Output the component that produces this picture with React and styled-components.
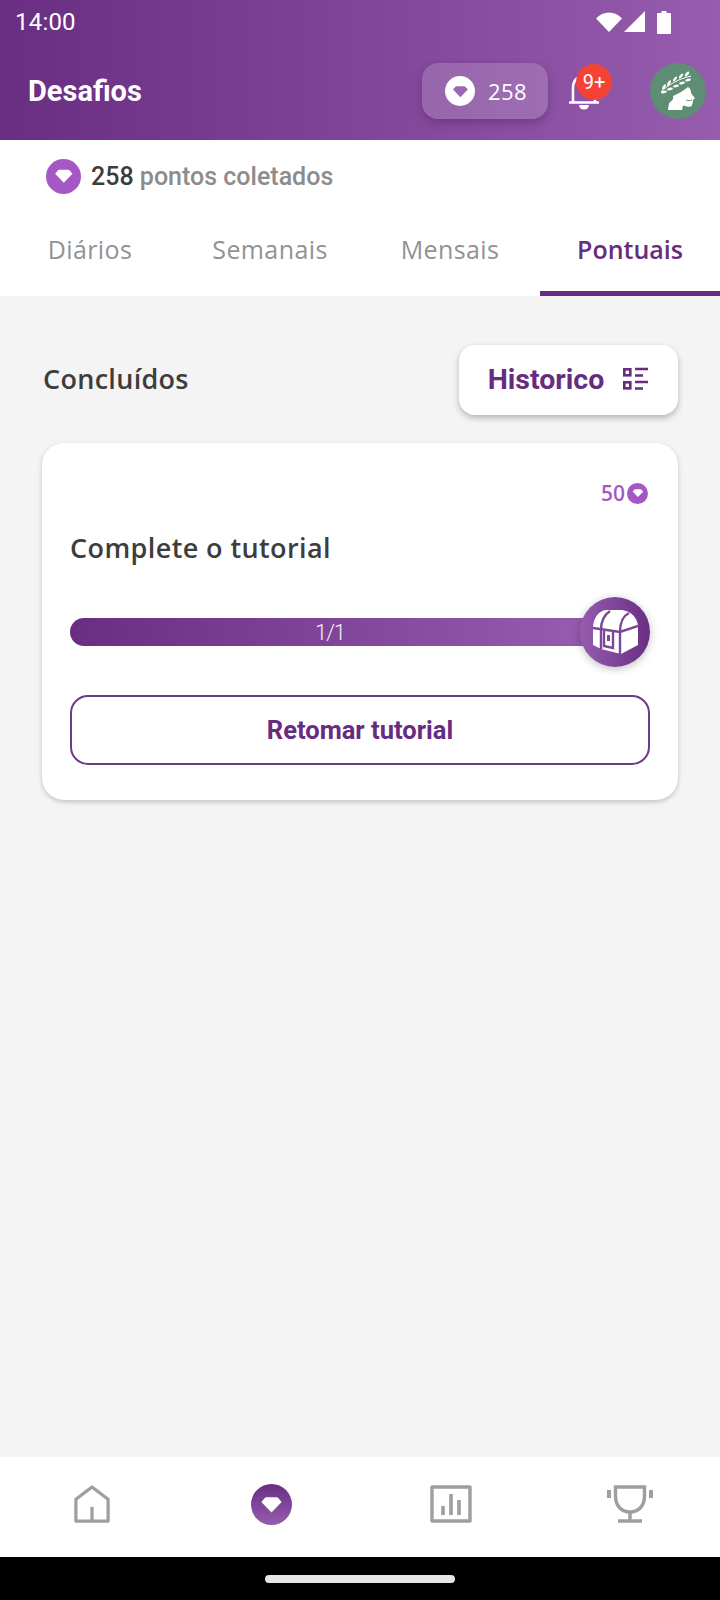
import React from 'react';
import styled, { createGlobalStyle } from 'styled-components';

const GlobalStyle = createGlobalStyle`
  html, body { margin: 0; padding: 0; background: #f4f4f4; }
  * { box-sizing: border-box; }
`;

const purpleGradient = 'linear-gradient(90deg, #692e82 0%, #965cae 100%)';
const roundedFont = '"Open Sans", Lato, sans-serif';

const Page = styled.div`
  width: 720px;
  height: 1600px;
  display: flex;
  flex-direction: column;
  overflow: hidden;
  font-family: Roboto, sans-serif;
  background: #f4f4f4;
`;

const Header = styled.header`
  height: 140px;
  padding: 0 14px 0 15px;
  background: ${purpleGradient};
  color: #fff;
`;

const StatusBar = styled.div`
  height: 44px;
  display: flex;
  align-items: center;
  justify-content: space-between;
  font-size: 24px;
  letter-spacing: 0.2px;
`;

const StatusIcons = styled.div`
  display: flex;
  align-items: center;
  margin-right: 35px;
`;

const SignalSlot = styled.span`
  display: flex;
  margin: 0 12px 0 2px;
`;

const Toolbar = styled.div`
  height: 96px;
  padding: 0 0 2px 13px;
  display: flex;
  align-items: center;
  justify-content: space-between;
`;

const Title = styled.h1`
  margin: 0;
  font-size: 29px;
  font-weight: 700;
`;

const ToolbarRight = styled.div`
  display: flex;
  align-items: center;
`;

const PointsChip = styled.div`
  width: 126px;
  height: 56px;
  padding-left: 2px;
  border-radius: 16px;
  background: rgba(255, 255, 255, 0.16);
  box-shadow: 0 4px 8px rgba(60, 20, 80, 0.3);
  display: flex;
  align-items: center;
  justify-content: center;
  gap: 13px;
  font-family: ${roundedFont};
  font-size: 22px;
  letter-spacing: 0.4px;
`;

const BellWrap = styled.div`
  position: relative;
  width: 30px;
  height: 36px;
  margin: 2px 51px 0 21px;
`;

const Badge = styled.span`
  position: absolute;
  left: 7px;
  top: -10px;
  width: 36px;
  height: 36px;
  border-radius: 50%;
  background: #f44336;
  display: flex;
  align-items: center;
  justify-content: center;
  font-size: 20px;
  color: #fff;
`;

const Avatar = styled.div`
  width: 56px;
  height: 56px;
  border-radius: 50%;
  background: #5d8d72;
  overflow: hidden;
`;

const PointsRow = styled.div`
  height: 72px;
  padding: 0 46px 0;
  background: #fff;
  display: flex;
  align-items: center;
  gap: 10px;
  font-size: 25px;
  font-weight: 500;
  color: #8c8c8c;
`;

const PointsValue = styled.span`
  color: #3c3c3c;
`;

const Tabs = styled.nav`
  height: 84px;
  background: #fff;
  display: grid;
  grid-template-columns: repeat(4, 1fr);
`;

const Tab = styled.div`
  display: flex;
  align-items: center;
  justify-content: center;
  padding-bottom: 6px;
  font-family: ${roundedFont};
  font-size: 25px;
  letter-spacing: ${(p) => (p.$active ? 0 : 0.4)}px;
  font-weight: ${(p) => (p.$active ? 600 : 400)};
  color: ${(p) => (p.$active ? '#672c80' : '#929292')};
  border-bottom: 5px solid ${(p) => (p.$active ? '#672c80' : 'transparent')};
`;

const Content = styled.main`
  flex: 1;
  padding: 49px 42px 0;
`;

const SectionHead = styled.div`
  height: 70px;
  display: flex;
  align-items: center;
  justify-content: space-between;
`;

const SectionTitle = styled.h2`
  margin: 0 0 3px 1px;
  font-family: ${roundedFont};
  font-size: 27px;
  font-weight: 600;
  letter-spacing: 0.3px;
  color: #3d3d3d;
`;

const HistoryButton = styled.button`
  width: 219px;
  height: 70px;
  padding: 0 0 2px;
  border: 0;
  border-radius: 16px;
  background: #fff;
  box-shadow: 0 3px 6px rgba(0, 0, 0, 0.26);
  display: flex;
  align-items: center;
  justify-content: center;
  gap: 19px;
  font-family: Roboto, sans-serif;
  font-size: 28.500px;
  font-weight: 700;
  color: #672c80;
`;

const Card = styled.section`
  margin-top: 28px;
  height: 357px;
  padding: 38px 28px 0;
  border-radius: 22px;
  background: #fff;
  box-shadow: 0 2px 5px rgba(0, 0, 0, 0.2);
`;

const Reward = styled.div`
  display: flex;
  justify-content: flex-end;
  align-items: center;
  gap: 2px;
  height: 24px;
  padding-right: 2px;
  font-family: ${roundedFont};
  font-size: 21px;
  font-weight: 600;
  color: #a657c6;
`;

const CardTitle = styled.h3`
  margin: 23px 0 0;
  height: 40px;
  line-height: 40px;
  font-family: ${roundedFont};
  font-size: 27px;
  font-weight: 600;
  letter-spacing: 0.4px;
  color: #3d3d3d;
`;

const ProgressWrap = styled.div`
  position: relative;
  margin-top: 50px;
  height: 28px;
`;

const ProgressBar = styled.div`
  width: 520px;
  height: 28px;
  border-radius: 14px 0 0 14px;
  background: ${purpleGradient};
  display: flex;
  align-items: center;
  justify-content: center;
  color: #f3eaf6;
  font-size: 22px;
  font-weight: 300;
  letter-spacing: -1px;
`;

const ChestBadge = styled.div`
  position: absolute;
  right: 0;
  top: -21px;
  width: 70px;
  height: 70px;
  border-radius: 50%;
  background: linear-gradient(90deg, #965cae 0%, #692e82 100%);
  box-shadow: 0 2px 8px rgba(0, 0, 0, 0.25);
  display: flex;
  align-items: center;
  justify-content: center;
`;

const ResumeButton = styled.button`
  display: block;
  width: 100%;
  height: 70px;
  margin-top: 49px;
  border: 2px solid #6f3a88;
  border-radius: 18px;
  background: #fff;
  font-family: Roboto, sans-serif;
  font-size: 25.500px;
  font-weight: 700;
  color: #672c80;
`;

const BottomNav = styled.nav`
  height: 100px;
  padding: 0 0 6px 2px;
  background: #fff;
  display: grid;
  grid-template-columns: repeat(4, 1fr);
`;

const NavItem = styled.div`
  display: flex;
  align-items: center;
  justify-content: center;
`;

const SystemBar = styled.div`
  height: 43px;
  background: #000;
  display: flex;
  justify-content: center;
  padding-top: 18px;
`;

const HomeHandle = styled.div`
  width: 190px;
  height: 8px;
  border-radius: 4px;
  background: #e6e6e6;
`;

const GemDisc = styled.span`
  width: ${(p) => p.$size}px;
  height: ${(p) => p.$size}px;
  border-radius: 50%;
  flex: none;
  background: ${(p) => p.$bg};
  display: inline-flex;
  align-items: center;
  justify-content: center;
`;

const Gem = ({ size, bg, fg = '#fff' }) => (
  <GemDisc $size={size} $bg={bg}>
    <svg width={size * 0.56} height={size * 0.56} viewBox="0 0 24 24">
      <path d="M6.500 4.500h11a2 2 0 0 1 1.500.7l3.600 4.200-10.600 11-10.600-11L5 5.200a2 2 0 0 1 1.500-.7z" fill={fg} />
    </svg>
  </GemDisc>
);

const WifiIcon = () => (
  <svg width="26" height="22" viewBox="0 0 26 22">
    <path d="M0 7.500C3.500 3.500 8 1.500 13 1.500s9.500 2 13 6L13 21z" fill="#fff" />
  </svg>
);

const SignalIcon = () => (
  <svg width="21" height="22" viewBox="0 0 21 22">
    <path d="M21 0v21H0z" fill="#fff" />
  </svg>
);

const BatteryIcon = () => (
  <svg width="14" height="23" viewBox="0 0 14 23">
    <path d="M4.500 0h5v2H13a1 1 0 0 1 1 1v19a1 1 0 0 1-1 1H1a1 1 0 0 1-1-1V3a1 1 0 0 1 1-1h3.500z" fill="#fff" />
  </svg>
);

const BellIcon = () => (
  <svg width="30" height="36" viewBox="0 0 30 36" fill="none">
    <path d="M4 28V14C4 6 9 2 15 2s11 4 11 12v14" stroke="#fff" strokeWidth="2.600" />
    <path d="M1 28.500h28" stroke="#fff" strokeWidth="2.600" strokeLinecap="round" />
    <path d="M10 31h10a5 4.500 0 0 1-10 0z" fill="#fff" />
  </svg>
);

// two rows of leaves following the wreath, from the back of the head to the brow
const laurelLeaves = [
  [14, 24, -55], [19, 20, -55], [25, 16, -50], [31, 13, -50], [37, 11, -45],
  [14, 29, -8], [20, 26, -8], [26, 23, -10], [32, 20, -12], [38, 17, -15],
];

const CaesarIcon = () => (
  <svg width="56" height="56" viewBox="0 0 56 56">
    <path d="M23 33C28 31 33 28 38 24 40 25 41 27 41 30L45 35.500 43 36.500C43.500 38 43 38.500 42.500 39 43 40 42.500 41 42 41.500 42 43.500 40 44 37 43.500L33 42.500 32 47H18C18.500 44 18.500 41 19.500 39.500 22 38 24 36 23 33z" fill="#fff" />
    <path d="M36 37c2 .8 4 .8 6 .2" fill="none" stroke="#5d8d72" strokeWidth="1" />
    <path d="M11 29C18 22 28 16 41 13" fill="none" stroke="#fff" strokeWidth="1" />
    {laurelLeaves.map(([x, y, angle]) => (
      <ellipse key={`${x}-${y}`} cx={x} cy={y} rx="3" ry="1.300" fill="#fff" transform={`rotate(${angle} ${x} ${y})`} />
    ))}
  </svg>
);

const FilterListIcon = () => (
  <svg width="26" height="24" viewBox="0 0 26 24" fill="none" stroke="#672c80" strokeWidth="2.600">
    <rect x="1.300" y="2.300" width="6" height="6" />
    <rect x="1.300" y="15.300" width="6" height="6" />
    <path d="M12 2h13M12 8.500h8M12 15h13M12 21.500h8" />
  </svg>
);

const ChestIcon = () => (
  <svg width="45" height="44" viewBox="0 0 45 44">
    <path d="M0 18C0 8 6 0 14 0h15c9 1 16 8 16 17v18l-17 9-20-5-8-4z" fill="#fff" />
    <g fill="none" stroke="#7d4796" strokeWidth="2.400">
      <path d="M0 18l27 4 18-6" />
      <path d="M8 20C8 12 11 5 17 1" />
      <path d="M27 22C27 13 30 6 36 3" />
      <path d="M8 20v19M27 22v22" />
      <path d="M11 21v15l9 2V22" />
    </g>
    <rect x="14" y="25" width="3" height="6" fill="#7d4796" />
  </svg>
);

const HomeIcon = () => (
  <svg width="36" height="38" viewBox="0 0 38 40" fill="none" stroke="#9e9e9e" strokeWidth="3.400" strokeLinejoin="round">
    <path d="M2 15 19 2l17 13v23H2z" />
    <path d="M19 23v15" />
  </svg>
);

const StatsIcon = () => (
  <svg width="42" height="38" viewBox="0 0 42 38" fill="none" stroke="#9e9e9e">
    <rect x="2" y="2" width="38" height="34" strokeWidth="3.400" strokeLinejoin="round" />
    <path d="M13 21v9M21 9v21M29 15v15" strokeWidth="3.600" />
  </svg>
);

const TrophyIcon = () => (
  <svg width="46" height="38" viewBox="0 0 46 38" fill="none" stroke="#9e9e9e" strokeWidth="3.400">
    <path d="M8.500 2h29v9c0 10-6 16-14.500 16S8.500 21 8.500 11z" />
    <path d="M23 27v9M11 36h24" />
    <path d="M2 5v8M44 5v8" strokeWidth="4" />
  </svg>
);

const tabs = ['Diários', 'Semanais', 'Mensais', 'Pontuais'];

export default function App() {
  return (
    <Page>
      <GlobalStyle />
      <Header>
        <StatusBar>
          <span>14:00</span>
          <StatusIcons>
            <WifiIcon />
            <SignalSlot>
              <SignalIcon />
            </SignalSlot>
            <BatteryIcon />
          </StatusIcons>
        </StatusBar>
        <Toolbar>
          <Title>Desafios</Title>
          <ToolbarRight>
            <PointsChip>
              <Gem size={30} bg="#fff" fg="#9a68b2" />
              258
            </PointsChip>
            <BellWrap>
              <BellIcon />
              <Badge>9+</Badge>
            </BellWrap>
            <Avatar>
              <CaesarIcon />
            </Avatar>
          </ToolbarRight>
        </Toolbar>
      </Header>

      <PointsRow>
        <Gem size={35} bg="#a657c6" />
        <span>
          <PointsValue>258</PointsValue> pontos coletados
        </span>
      </PointsRow>

      <Tabs>
        {tabs.map((tab) => (
          <Tab key={tab} $active={tab === 'Pontuais'}>
            {tab}
          </Tab>
        ))}
      </Tabs>

      <Content>
        <SectionHead>
          <SectionTitle>Concluídos</SectionTitle>
          <HistoryButton>
            Historico
            <FilterListIcon />
          </HistoryButton>
        </SectionHead>

        <Card>
          <Reward>
            50
            <Gem size={21} bg="#a657c6" />
          </Reward>
          <CardTitle>Complete o tutorial</CardTitle>
          <ProgressWrap>
            <ProgressBar>1/1</ProgressBar>
            <ChestBadge>
              <ChestIcon />
            </ChestBadge>
          </ProgressWrap>
          <ResumeButton>Retomar tutorial</ResumeButton>
        </Card>
      </Content>

      <BottomNav>
        <NavItem>
          <HomeIcon />
        </NavItem>
        <NavItem>
          <Gem size={41} bg="linear-gradient(180deg, #692e82 0%, #965cae 100%)" />
        </NavItem>
        <NavItem>
          <StatsIcon />
        </NavItem>
        <NavItem>
          <TrophyIcon />
        </NavItem>
      </BottomNav>
      <SystemBar>
        <HomeHandle />
      </SystemBar>
    </Page>
  );
}
